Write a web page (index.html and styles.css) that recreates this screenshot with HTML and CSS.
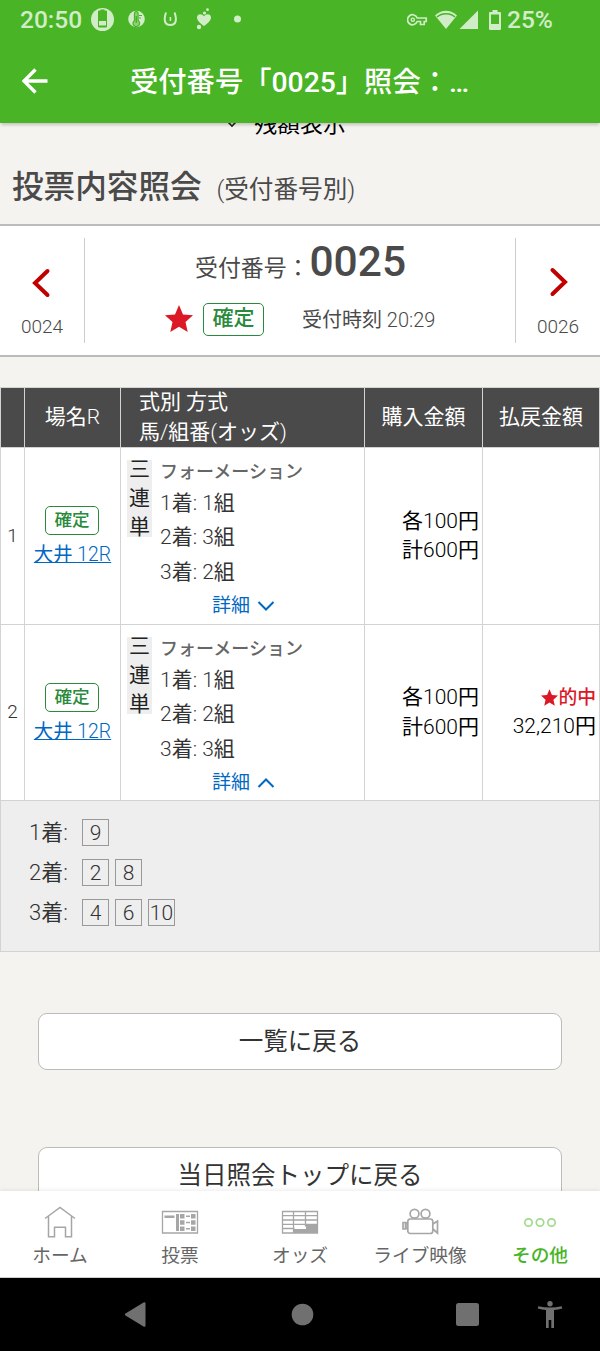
FILE: index.html
```html
<!DOCTYPE html>
<html lang="ja">
<head>
    <meta charset="UTF-8">
    <meta name="viewport" content="width=device-width, initial-scale=1.0">
    <title>投票内容照会</title>
    <link rel="stylesheet" href="styles.css">
</head>
<body>

<div class="status-bar">
    <span class="clock">20:50</span>
    <svg class="status-left" width="160" height="26" viewBox="88 7 160 26" fill="#d0edc7">
        <circle cx="102.500" cy="19.500" r="11.500"/>
        <path d="M98 11.500q0-1 1-1h1.500V9.500h4v1h1.500q1 0 1 1v15q0 1-1 1h-7q-1 0-1-1z" fill="#49b426"/>
        <path d="M99 21h7v4.500h-7z"/>
        <circle cx="136.500" cy="19" r="8.300"/>
        <path d="M134.500 20.500v-7a1.800 1.800 0 0 1 3.600 0v7a3.300 3.300 0 1 1-3.600 0zM139 15.500h3M139 18h2" fill="#8dd077" stroke="#49b426" stroke-width="1.200"/>
        <path d="M136.300 16v7" stroke="#49b426" stroke-width="1.500"/>
        <path d="M166 12.500c-2.300 7-1.800 12.500 4.300 12.500s6.600-5.500 4.300-12.500" fill="none" stroke="#d0edc7" stroke-width="2"/>
        <path d="M170.400 17v4" stroke="#d0edc7" stroke-width="1.600"/>
        <path d="M204 26c-3-2-7-5.200-7-8.500 0-4 5-4.500 7-1.200 2-3.300 7-2.800 7 1.200 0 3.300-4 6.500-7 8.500z"/>
        <circle cx="199" cy="27" r="2.200"/>
        <circle cx="204.500" cy="13" r="1.600"/>
        <circle cx="207.500" cy="9.700" r="1.400"/>
        <circle cx="237.500" cy="19" r="3.500"/>
    </svg>
    <svg class="status-right" width="96" height="24" viewBox="407 7 96 24" fill="#d0edc7">
        <path d="M417.200 17h9v3.500h-2v3h-3.700v-3h-3.300a5 5 0 1 1 0-3.500z" fill="none" stroke="#d0edc7" stroke-width="1.700"/>
        <circle cx="412.800" cy="18.700" r="1.600" fill="none" stroke="#d0edc7" stroke-width="1.400"/>
        <path d="M446 28l-11-13.500c6-6.500 16-6.500 22 0z" />
        <path d="M437 16c5-4.300 13-4.300 18 0" fill="none" stroke="#49b426" stroke-width="1.400"/>
        <path d="M459.500 28L478 9.500V28z"/>
        <path d="M490 11h2.500V9h5v2h2.500q1 0 1 1v16q0 1-1 1h-10q-1 0-1-1V12q0-1 1-1zm1 2.500V23h8v-9.500z"/>
    </svg>
    <span class="battery">25%</span>
</div>

<header class="app-header">
    <svg width="28" height="28" viewBox="0 0 28 28" fill="none" stroke="#fff" stroke-width="3.300">
        <path d="M15.500 2.500L4 14l11.500 11.500M3 14h24.500"/>
    </svg>
    <h1>受付番号「0025」照会：…</h1>
</header>

<main>
    <div class="balance">
        <svg width="10" height="8" viewBox="0 0 10 8" fill="none" stroke="#222" stroke-width="1.600"><path d="M1 2l4 4 4-4"/></svg>
        <span>残額表示</span>
    </div>

    <h2 class="page-title">投票内容照会 <small>(受付番号別)</small></h2>

    <section class="receipt">
        <a class="receipt-nav prev">
            <svg width="20" height="30" viewBox="0 0 20 30"><path d="M16.500 3L4 15l12.500 12"/></svg>
            <span>0024</span>
        </a>
        <div class="receipt-info">
            <p class="receipt-no">受付番号：<strong>0025</strong></p>
            <div class="receipt-state">
                <svg class="star" width="28" height="27" viewBox="0 0 28 27" fill="#dc1826"><path d="M14 0l4 9.400 10 .9-7.500 6.700 2.200 10L14 21.700 5.300 27l2.200-10L0 10.300l10-.9z"/></svg>
                <span class="badge badge-lg">確定</span>
                <span class="receipt-time">受付時刻 20:29</span>
            </div>
        </div>
        <a class="receipt-nav next">
            <svg width="20" height="30" viewBox="0 0 20 30"><path d="M3.500 3L16 15 3.500 27"/></svg>
            <span>0026</span>
        </a>
    </section>

    <table class="bets">
        <colgroup>
            <col class="c-no"><col class="c-race"><col class="c-type"><col class="c-buy"><col class="c-pay">
        </colgroup>
        <thead>
            <tr>
                <th></th>
                <th>場名R</th>
                <th class="left">式別 方式<br>馬/組番(オッズ)</th>
                <th>購入金額</th>
                <th>払戻金額</th>
            </tr>
        </thead>
        <tbody>
            <tr class="row-first">
                <td class="no">1</td>
                <td class="race"><span class="badge">確定</span><a>大井 12R</a></td>
                <td class="type">
                    <div class="type-inner">
                        <span class="kind">三<br>連<br>単</span>
                        <div class="picks">
                            <b>フォーメーション</b>
                            <p>1着: 1組</p>
                            <p>2着: 3組</p>
                            <p>3着: 2組</p>
                            <a class="detail">詳細 <svg width="18" height="12" viewBox="0 0 18 12"><path d="M1.500 2L9 9.500 16.500 2"/></svg></a>
                        </div>
                    </div>
                </td>
                <td class="money">各100円<br>計600円</td>
                <td class="money"></td>
            </tr>
            <tr class="row-second">
                <td class="no">2</td>
                <td class="race"><span class="badge">確定</span><a>大井 12R</a></td>
                <td class="type">
                    <div class="type-inner">
                        <span class="kind">三<br>連<br>単</span>
                        <div class="picks">
                            <b>フォーメーション</b>
                            <p>1着: 1組</p>
                            <p>2着: 2組</p>
                            <p>3着: 3組</p>
                            <a class="detail">詳細 <svg width="18" height="12" viewBox="0 0 18 12"><path d="M1.500 10L9 2.500l7.500 7.500"/></svg></a>
                        </div>
                    </div>
                </td>
                <td class="money">各100円<br>計600円</td>
                <td class="money">
                    <span class="hit"><svg width="17" height="17" viewBox="0 0 28 27" fill="#dc1826"><path d="M14 0l4 9.400 10 .9-7.500 6.700 2.200 10L14 21.700 5.300 27l2.200-10L0 10.300l10-.9z"/></svg>的中</span>
                    32,210円
                </td>
            </tr>
            <tr class="row-detail">
                <td colspan="5">
                    <div class="rank"><span>1着:</span><i>9</i></div>
                    <div class="rank"><span>2着:</span><i>2</i><i>8</i></div>
                    <div class="rank"><span>3着:</span><i>4</i><i>6</i><i>10</i></div>
                </td>
            </tr>
        </tbody>
    </table>

    <a class="button">一覧に戻る</a>
    <a class="button">当日照会トップに戻る</a>
</main>

<nav class="tabs">
    <a>
        <svg width="40" height="34" viewBox="0 0 40 34" fill="none" stroke="#a6a6a6" stroke-width="1.500">
            <path d="M5 13.500L20 2.500l15 11M8.500 11.500v20.200h6v-9.500h11v9.500h6V11.500"/>
        </svg>
        <span>ホーム</span>
    </a>
    <a>
        <svg width="40" height="34" viewBox="0 0 40 34" fill="#a6a6a6">
            <path d="M2.500 6.500h35v21.500h-35z" fill="none" stroke="#a6a6a6" stroke-width="1.300"/>
            <path d="M4.500 10.500h10v2.500h-10zM16 9h3v17h-3zM20 9h4.500v4.500H20zM31 9h4.500v4.500H31zM20 15.300h4.500v4.500H20zM31 15.300h4.500v4.500H31zM20 21.500h4.500V26H20zM31 21.500h4.500V26H31zM26 10.500h4V12h-4zM26 16.800h4v1.500h-4zM26 23h4v1.500h-4z"/>
        </svg>
        <span>投票</span>
    </a>
    <a>
        <svg width="40" height="34" viewBox="0 0 40 34" fill="none" stroke="#a6a6a6" stroke-width="1.300">
            <path d="M2.500 6.500h35v21.500h-35zM2.500 10.700h35M2.500 15h35M2.500 19.300h35M2.500 23.500h12M13.500 6.500v21.500M25.500 6.500v15"/>
            <path d="M14 24h12v-5h11.500v9H14z" fill="#a6a6a6" stroke="none"/>
        </svg>
        <span>オッズ</span>
    </a>
    <a>
        <svg width="40" height="34" viewBox="0 0 40 34" fill="none" stroke="#a6a6a6" stroke-width="1.700">
            <circle cx="14.500" cy="8.800" r="4.400"/>
            <circle cx="25.500" cy="8.800" r="4.400"/>
            <rect x="7.800" y="14" width="25" height="14.500" rx="2.500"/>
            <path d="M3 17.500h2.500v6.500H3zM7.800 17.500L6 19v4l1.800 1M33 19l4.500-3v12L33 24"/>
        </svg>
        <span>ライブ映像</span>
    </a>
    <a class="active">
        <svg width="40" height="34" viewBox="0 0 40 34" fill="none" stroke="#a0db8c" stroke-width="1.700">
            <circle cx="8.500" cy="17.500" r="3.700"/>
            <circle cx="20" cy="17.500" r="3.700"/>
            <circle cx="31.500" cy="17.500" r="3.700"/>
        </svg>
        <span>その他</span>
    </a>
</nav>

<footer class="system-nav">
    <svg width="600" height="73" viewBox="0 1278 600 73" fill="#707070">
        <path d="M125.500 1313.500l18-11q2-1 2 1v22q0 2-2 1l-18-11q-1.300-1 0-2z"/>
        <circle cx="302.500" cy="1314.500" r="10.800"/>
        <rect x="456" y="1303" width="23" height="23" rx="2.500"/>
        <circle cx="550" cy="1303.700" r="2.700"/>
        <path d="M538.300 1306.300q11.700 2.500 23.400 0l.5 2.200q-4 1.200-8.200 1.500v18h-2.700v-8h-2.600v8H546v-18q-4.200-.3-8.200-1.500z"/>
    </svg>
</footer>

</body>
</html>
```
FILE: styles.css
```css
* {
    box-sizing: border-box;
    margin: 0;
    padding: 0;
}

body {
    width: 600px;
    height: 1351px;
    overflow: hidden;
    display: flex;
    flex-direction: column;
    background-color: #f5f3f0;
    font-family: "Roboto Light", Roboto, "Noto Sans CJK JP", sans-serif;
    font-size: 21px;
    font-weight: 400;
    line-height: 1.4;
    color: #333;
}

svg {
    display: block;
    flex: none;
}

/* Status bar and header */
.status-bar {
    height: 39px;
    flex: none;
    display: flex;
    align-items: center;
    background-color: #49b426;
    color: #d0edc7;
    font-family: Roboto, sans-serif;
    font-size: 24.5px;
    font-weight: 500;
    padding: 1px 20px 0;
}

.clock {
    width: 68px;
}

.status-right {
    margin-left: 159px;
    margin-right: 4px;
}

.app-header {
    height: 84px;
    flex: none;
    display: flex;
    align-items: center;
    padding-left: 20px;
    background-color: #49b426;
    color: #fff;
    box-shadow: 0 3px 3px -1px rgba(0, 0, 0, 0.2);
    position: relative;
}

.app-header h1 {
    margin-left: 82px;
    padding-top: 3px;
    font-family: Roboto, "Noto Sans CJK JP", sans-serif;
    font-size: 28.3px;
    font-weight: 500;
    line-height: 40px;
}

/* Content */
main {
    flex: 1;
    overflow: hidden;
}

.balance {
    display: flex;
    justify-content: center;
    gap: 17px;
    height: 32px;
    margin-top: -14px;
    padding-right: 27px;
    font-size: 22.9px;
    line-height: 31px;
    color: #000;
}

.balance svg {
    margin-top: 11px;
}

.page-title {
    height: 83px;
    padding: 25px 12px 0;
    font-family: Roboto, "Noto Sans CJK JP", sans-serif;
    font-size: 31.6px;
    font-weight: 500;
    line-height: 44px;
    color: #4a4a4a;
}

.page-title small {
    font-family: "Roboto Light", Roboto, "Noto Sans CJK JP", sans-serif;
    font-size: 24.6px;
    font-weight: 400;
    margin-left: 7px;
}

.receipt {
    display: flex;
    height: 133px;
    padding: 12px 0;
    background-color: #fff;
    border-top: 2px solid #bbb;
    border-bottom: 2px solid #bbb;
    color: #4a4a4a;
}

.receipt-nav {
    width: 85px;
    display: flex;
    flex-direction: column;
    align-items: center;
    padding-top: 30px;
    font-size: 19px;
    line-height: 26px;
}

.receipt-nav path,
.detail path {
    fill: none;
    stroke: #c00000;
    stroke-width: 4;
    stroke-linecap: round;
}

.receipt-nav span {
    margin-top: 16px;
}

.prev {
    border-right: 1px solid #ccc;
}

.prev svg {
    margin-left: -2px;
}

.next {
    border-left: 1px solid #ccc;
}

.next svg {
    margin-top: -1px;
    margin-bottom: 1px;
    margin-left: 2px;
}

.receipt-info {
    flex: 1;
}

.receipt-no {
    padding-left: 110px;
    font-size: 22.9px;
    line-height: 48px;
    white-space: nowrap;
}

.receipt-no strong {
    font-family: Roboto, sans-serif;
    font-size: 42.5px;
    font-weight: 500;
}

.receipt-state {
    display: flex;
    align-items: center;
    padding: 10px 0 0 80px;
}

.star {
    margin-bottom: 3px;
}

.badge {
    display: block;
    width: 54px;
    height: 29px;
    border: 1px solid #2a8a3c;
    border-radius: 5px;
    background-color: #fff;
    color: #2a8a3c;
    font-size: 17.6px;
    font-weight: 500;
    line-height: 26px;
    text-align: center;
}

.badge-lg {
    width: 61px;
    height: 33px;
    margin-left: 10px;
    font-size: 21px;
    line-height: 28px;
}

.receipt-time {
    margin-left: 38px;
    font-size: 20px;
}

/* Bet table */
.bets {
    width: 600px;
    margin-top: 30px;
    table-layout: fixed;
    border-spacing: 0;
    border-top: 1px solid #d3d3d3;
    border-left: 1px solid #d3d3d3;
}

.c-no { width: 24px; }
.c-race { width: 96px; }
.c-type { width: 244px; }
.c-buy { width: 118px; }
.c-pay { width: 117px; }

.bets th,
.bets td {
    border-right: 1px solid #d3d3d3;
    border-bottom: 1px solid #d3d3d3;
    vertical-align: middle;
    background-color: #fff;
}

.bets th {
    height: 60px;
    background-color: #4a4a4a;
    color: #fff;
    font-weight: 400;
}

.bets .left {
    padding-left: 18px;
    text-align: left;
}

.row-first { height: 177px; }
.row-second { height: 176px; }
.row-detail { height: 151px; }

.bets .no {
    font-size: 19px;
    text-align: center;
}

.race a {
    display: block;
    margin-top: 6px;
    font-size: 19.4px;
    line-height: 28px;
    text-align: center;
    text-decoration: underline;
    color: #0068c3;
}

.race .badge {
    margin: 3px auto 0 20px;
}

.bets .type {
    vertical-align: top;
    padding: 8px 0 0 6px;
}

.type-inner {
    display: flex;
}

.kind {
    width: 25px;
    height: 77px;
    margin-top: 4px;
    background-color: #eee;
    line-height: 29px;
    text-align: center;
    color: #222;
}

/* the first character sits slightly above the grey strip */
.kind::before {
    content: "";
    display: block;
    margin-top: -5px;
}

.picks {
    flex: 1;
    padding-left: 8px;
}

.picks b {
    display: block;
    font-size: 18px;
    font-weight: 500;
    line-height: 31px;
    margin-bottom: -1px;
    color: #666;
}

.picks p {
    line-height: 34.4px;
}

.detail {
    display: flex;
    align-items: center;
    gap: 7px;
    margin-left: 52px;
    font-size: 19px;
    line-height: 34px;
    color: #0068c3;
}

.detail path {
    stroke: #0068c3;
    stroke-width: 2;
    stroke-linecap: butt;
}

.bets .money {
    padding-right: 3px;
    text-align: right;
    color: #000;
}

.hit {
    display: flex;
    justify-content: flex-end;
    align-items: center;
    height: 28px;
    font-size: 18.8px;
    font-weight: 500;
    color: #dc1826;
}

.bets .row-detail td {
    vertical-align: top;
    padding: 18px 28px 0;
    background-color: #eee;
}

.rank {
    display: flex;
    gap: 6px;
    margin-bottom: 12px;
    line-height: 28px;
}

.rank span {
    width: 47px;
    font-size: 22px;
}

.rank i {
    width: 27px;
    height: 27px;
    border: 1px solid #999;
    font-style: normal;
    text-align: center;
    line-height: 27px;
}

.button {
    display: block;
    width: 524px;
    height: 57px;
    margin: 61px auto 77px;
    border: 1px solid #bbb;
    border-radius: 9px;
    background-color: #fff;
    font-size: 24.5px;
    line-height: 55px;
    text-align: center;
}

/* Bottom tabs */
.tabs {
    height: 87px;
    flex: none;
    display: flex;
    background-color: #fff;
    border-bottom: 1px solid #ccc;
    box-shadow: 0 -1px 4px rgba(0, 0, 0, 0.08);
    position: relative;
}

.tabs a {
    flex: 1;
    display: flex;
    flex-direction: column;
    align-items: center;
    padding-top: 14px;
    font-size: 18.7px;
    line-height: 34px;
    color: #666;
    white-space: nowrap;
}

.tabs .active {
    color: #49b426;
    font-weight: 500;
}

.system-nav {
    height: 73px;
    flex: none;
    background-color: #000;
}
```
